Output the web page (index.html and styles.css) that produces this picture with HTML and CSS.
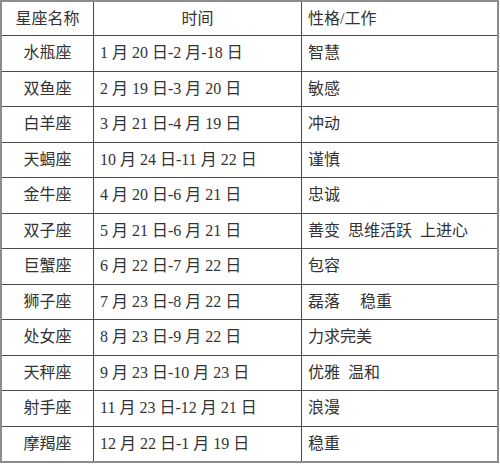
FILE: index.html
```html
<!DOCTYPE html>
<html lang="zh-CN">
<head>
<meta charset="utf-8">
<link rel="stylesheet" href="styles.css">
<title>星座</title>
</head>
<body>
<table class="zodiac">
  <colgroup>
    <col class="c-name">
    <col class="c-date">
    <col class="c-trait">
  </colgroup>
  <tr class="head">
    <td class="name">星座名称</td>
    <td class="date center">时间</td>
    <td class="trait">性格/工作</td>
  </tr>
  <tr><td class="name">水瓶座</td><td class="date">1 月 20 日-2 月-18 日</td><td class="trait">智慧</td></tr>
  <tr><td class="name">双鱼座</td><td class="date">2 月 19 日-3 月 20 日</td><td class="trait">敏感</td></tr>
  <tr><td class="name">白羊座</td><td class="date">3 月 21 日-4 月 19 日</td><td class="trait">冲动</td></tr>
  <tr><td class="name">天蝎座</td><td class="date">10 月 24 日-11 月 22 日</td><td class="trait">谨慎</td></tr>
  <tr><td class="name">金牛座</td><td class="date">4 月 20 日-6 月 21 日</td><td class="trait">忠诚</td></tr>
  <tr><td class="name">双子座</td><td class="date">5 月 21 日-6 月 21 日</td><td class="trait">善变&ensp;思维活跃&ensp;上进心</td></tr>
  <tr><td class="name">巨蟹座</td><td class="date">6 月 22 日-7 月 22 日</td><td class="trait">包容</td></tr>
  <tr><td class="name">狮子座</td><td class="date">7 月 23 日-8 月 22 日</td><td class="trait">磊落　 稳重</td></tr>
  <tr><td class="name">处女座</td><td class="date">8 月 23 日-9 月 22 日</td><td class="trait">力求完美</td></tr>
  <tr><td class="name">天秤座</td><td class="date">9 月 23 日-10 月 23 日</td><td class="trait">优雅&ensp;温和</td></tr>
  <tr><td class="name">射手座</td><td class="date">11 月 23 日-12 月 21 日</td><td class="trait">浪漫</td></tr>
  <tr class="last"><td class="name">摩羯座</td><td class="date">12 月 22 日-1 月 19 日</td><td class="trait">稳重</td></tr>
</table>
</body>
</html>
```
FILE: styles.css
```css
html, body {
  margin: 0;
  padding: 0;
  background: #ffffff;
}

.zodiac {
  table-layout: fixed;
  border-collapse: separate;
  border-spacing: 0;
  border: 2px solid #8c8c8c;
  width: 499px;
  font-family: "Liberation Serif", "Noto Sans CJK SC", serif;
  font-size: 16px;
  color: #333333;
}

.c-name { width: 92px; }
.c-date { width: 208px; }
.c-trait { width: 195px; }

.zodiac td {
  box-sizing: border-box;
  height: 35.5px;
  padding: 0 0 0 6px;
  line-height: 1;
  vertical-align: middle;
  white-space: nowrap;
  border-bottom: 1px solid #4a4a4a;
  border-right: 1px solid #4a4a4a;
}

.zodiac tr.head td {
  height: 34px;
}

.zodiac tr.last td {
  height: 34.5px;
  border-bottom: none;
}

.zodiac td.trait {
  border-right: none;
}

.zodiac td.name {
  padding: 0;
  text-align: center;
}

.zodiac td.center {
  padding: 0;
  text-align: center;
}
```
